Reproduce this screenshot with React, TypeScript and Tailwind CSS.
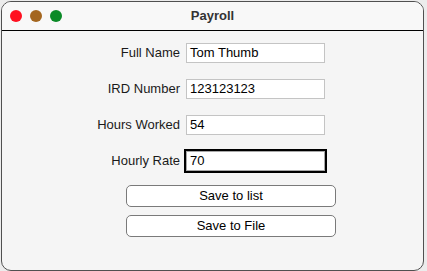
import React from "react";

const rows = [
  { label: "Full Name", value: "Tom Thumb", focus: false },
  { label: "IRD Number", value: "123123123", focus: false },
  { label: "Hours Worked", value: "54", focus: false },
  { label: "Hourly Rate", value: "70", focus: true },
];

export default function App() {
  return (
    <div className="w-[427px] h-[271px] bg-[#ececec] overflow-hidden" style={{ fontFamily: '"Liberation Sans", Arial, sans-serif' }}>
      <div className="ml-[1px] mt-[1px] w-[423px] h-[270px] rounded-[10px] border border-[#505050] bg-[#f5f5f5] overflow-hidden flex flex-col">
        <div className="relative h-[29px] shrink-0 bg-[#f8f8f8] border-b border-black flex items-center">
          <div className="flex items-center gap-[8px] ml-[8px] mt-[-1px]">
            <span className="w-[12px] h-[12px] rounded-full bg-[#ff1020]" />
            <span className="w-[12px] h-[12px] rounded-full bg-[#a4661f]" />
            <span className="w-[12px] h-[12px] rounded-full bg-[#0b8a27]" />
          </div>
          <div className="absolute inset-0 flex items-center justify-center text-[13px] font-bold text-[#333] mt-[-1px]">
            Payroll
          </div>
        </div>
        <div className="flex flex-col pt-[12px] gap-[16px]">
          {rows.map((r) => (
            <div key={r.label} className="flex items-center h-[20px]">
              <div className="w-[178px] text-right text-[13px] text-[#1a1a1a]">{r.label}</div>
              <div
                className={
                  "ml-[6px] w-[139px] h-[20px] bg-white border flex items-center pl-[3px] text-[13px] text-black " +
                  (r.focus ? "border-[#a8a8a8] shadow-[0_0_0_2px_#000]" : "border-[#c4c4c4]")
                }
              >
                {r.value}
              </div>
            </div>
          ))}
        </div>
        <div className="flex flex-col ml-[124px] mt-[14px] gap-[8px]">
          <button className="w-[210px] h-[22px] rounded-[5px] border border-[#7a7a7a] bg-white text-[13px] text-black flex items-center justify-center">
            Save to list
          </button>
          <button className="w-[210px] h-[22px] rounded-[5px] border border-[#7a7a7a] bg-white text-[13px] text-black flex items-center justify-center">
            Save to File
          </button>
        </div>
      </div>
    </div>
  );
}
